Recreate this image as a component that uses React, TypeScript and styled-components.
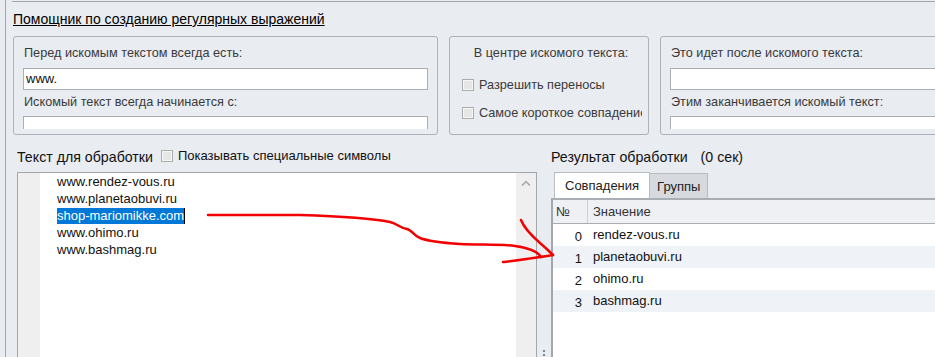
import styled, { createGlobalStyle } from "styled-components";

const GlobalStyle = createGlobalStyle`
  html, body {
    margin: 0;
    padding: 0;
    background: #e9ecf1;
  }
  body {
    font-family: "Liberation Sans", Arial, sans-serif;
    font-size: 13px;
    color: #1e1e1e;
  }
`;

const sourceLines = ["www.rendez-vous.ru", "www.planetaobuvi.ru", "shop-mariomikke.com", "www.ohimo.ru", "www.bashmag.ru"];
const matches = ["rendez-vous.ru", "planetaobuvi.ru", "ohimo.ru", "bashmag.ru"];

const Frame = styled.div`
  position: relative;
  width: 929px;
  height: 357px;
  margin-left: 5px;
  border-left: 1px solid #a3a7ad;
  display: flex;
  flex-direction: column;
  overflow: hidden;
  background: #e9ecf1;
`;

const TopSection = styled.div`
  margin: 1px 0 0 6px;
  border-top: 1px solid #a3a7ad;
  padding-left: 1px;
  height: 133px;
`;

const Title = styled.div`
  margin-top: 9px;
  line-height: 17px;
  font-size: 14px;
  color: #000;
  text-decoration: underline;
  white-space: nowrap;
`;

const GroupRow = styled.div`
  display: flex;
  gap: 11px;
  margin-top: 8px;
  height: 99px;
`;

const GroupBox = styled.div<{ $w: number }>`
  flex: 0 0 ${(p) => p.$w}px;
  min-width: 0;
  box-sizing: border-box;
  border: 1px solid #aeb2b8;
  border-radius: 3px;
  display: flex;
  flex-direction: column;
  overflow: hidden;
`;

const GroupBody = styled.div<{ $tight?: boolean }>`
  flex: 1;
  overflow: hidden;
  margin-bottom: 5px;
  padding: 8px ${(p) => (p.$tight ? 6 : 9)}px 0 9px;
  display: flex;
  flex-direction: column;
`;

const Label = styled.div<{ $center?: boolean }>`
  font-size: 12.7px;
  line-height: 16px;
  padding-left: 1px;
  color: #3a3a3a;
  white-space: nowrap;
  text-align: ${(p) => (p.$center ? "center" : "left")};
`;

const TextInput = styled.div<{ $gap: number }>`
  flex: 0 0 auto;
  box-sizing: border-box;
  height: 22px;
  margin-top: ${(p) => p.$gap}px;
  margin-bottom: 4px;
  background: #fff;
  border: 1px solid #abafb5;
  padding: 0 2px;
  line-height: 20px;
  color: #111;
`;

const CheckRow = styled.label<{ $top: number }>`
  display: flex;
  align-items: center;
  gap: 5px;
  margin-top: ${(p) => p.$top}px;
  margin-left: 3px;
  font-size: 12.7px;
  line-height: 16px;
  color: #3a3a3a;
  white-space: nowrap;
  overflow: hidden;
`;

const Box = styled.span`
  flex: 0 0 auto;
  width: 12px;
  height: 12px;
  box-sizing: border-box;
  border: 1px solid #acacac;
  background: #e6e6e6;
  box-shadow: inset 0 0 0 1px #f7f7f7;
`;

const LowerRow = styled.div`
  flex: 1;
  display: flex;
  padding-left: 11px;
  min-height: 0;
`;

const LeftPane = styled.div`
  flex: 0 0 520px;
  display: flex;
  flex-direction: column;
`;

const PaneHeader = styled.div`
  display: flex;
  align-items: center;
  height: 18px;
  margin-top: 13px;
  margin-bottom: 6px;
  white-space: nowrap;
`;

const Heading = styled.span`
  font-size: 14.2px;
  color: #111;
`;

const HeaderCheck = styled(CheckRow)`
  margin: 0 0 2px 8px;
  font-size: 13px;
  color: #111;
`;

const Editor = styled.div`
  flex: 1;
  display: flex;
  border: 1px solid #a3a7ad;
  border-bottom: none;
  background: #fff;
`;

const Gutter = styled.div`
  flex: 0 0 22px;
  background: #efefef;
`;

const Lines = styled.div`
  flex: 1;
  padding: 0 0 0 17px;
`;

const Line = styled.div`
  line-height: 17px;
  height: 17px;
  color: #111;
  white-space: nowrap;
`;

const Selected = styled.span`
  display: inline-block;
  background: #0078d7;
  color: #fff;
  line-height: 16px;
  border-right: 1px solid #000;
`;

const Scrollbar = styled.div`
  flex: 0 0 20px;
  background: #efefef;
  display: flex;
  justify-content: center;
  padding-top: 7px;
`;

const Splitter = styled.div`
  flex: 0 0 14px;
  display: flex;
  align-items: flex-end;
  justify-content: center;
`;

const Grip = styled.div`
  width: 2px;
  height: 7px;
  margin-left: -1px;
  background: repeating-linear-gradient(#7d8188 0 2px, transparent 2px 4px);
`;

const RightPane = styled.div`
  flex: 1;
  display: flex;
  flex-direction: column;
`;

const Timing = styled.span`
  margin-left: 13px;
  font-size: 14.2px;
  color: #111;
`;

const TabStrip = styled.div`
  display: flex;
  align-items: flex-end;
  height: 26px;
  margin-left: 3px;
`;

const Tab = styled.div<{ $active?: boolean }>`
  box-sizing: border-box;
  height: ${(p) => (p.$active ? 26 : 25)}px;
  padding: 0 ${(p) => (p.$active ? 10 : 7)}px;
  background: ${(p) => (p.$active ? "#fff" : "#d6d9dd")};
  border: 1px solid #b9bdc3;
  border-bottom: none;
  border-left-width: ${(p) => (p.$active ? 1 : 0)}px;
  line-height: ${(p) => (p.$active ? 26 : 25)}px;
  color: #222;
`;

const Grid = styled.div`
  flex: 1;
  border-top: 2px solid #a9adb4;
  border-left: 2px solid #a3a7ad;
  background: #fff;
`;

const GridHead = styled.div`
  display: flex;
  height: 23px;
  background: #eef0f4;
  border-bottom: 1px solid #a9adb4;
  line-height: 23px;
  color: #333;
`;

const HeadCell = styled.div<{ $w?: number }>`
  flex: ${(p) => (p.$w ? `0 0 ${p.$w}px` : 1)};
  padding-left: ${(p) => (p.$w ? 3 : 5)}px;
  box-sizing: border-box;
  border-right: ${(p) => (p.$w ? "1px solid #cdd1d7" : "none")};
`;

const Row = styled.div<{ $alt: boolean }>`
  display: flex;
  height: 22px;
  line-height: 22px;
  background: ${(p) => (p.$alt ? "#eff2f7" : "#fff")};
  color: #111;
`;

const NumCell = styled.div`
  flex: 0 0 35px;
  box-sizing: border-box;
  padding: 2px 6px 0 0;
  text-align: right;
`;

const ValueCell = styled.div`
  flex: 1;
  padding-left: 5px;
`;

const Overlay = styled.svg`
  position: absolute;
  left: -6px;
  top: 0;
  pointer-events: none;
`;

const ChevronUp = () => (
  <svg width="10" height="6" viewBox="0 0 10 6">
    <path d="M1 5.5 L5 1.5 L9 5.5" fill="none" stroke="#a6a6a6" strokeWidth="1.5" />
  </svg>
);

export default function App() {
  return (
    <>
      <GlobalStyle />
      <Frame>
        <TopSection>
          <Title>Помощник по созданию регулярных выражений</Title>
          <GroupRow>
            <GroupBox $w={425}>
              <GroupBody>
                <Label>Перед искомым текстом всегда есть:</Label>
                <TextInput $gap={7}>www.</TextInput>
                <Label>Искомый текст всегда начинается с:</Label>
                <TextInput $gap={6} />
              </GroupBody>
            </GroupBox>
            <GroupBox $w={200}>
              <GroupBody $tight>
                <Label $center>В центре искомого текста:</Label>
                <CheckRow $top={16}>
                  <Box />
                  Разрешить переносы
                </CheckRow>
                <CheckRow $top={12}>
                  <Box />
                  Самое короткое совпадение
                </CheckRow>
              </GroupBody>
            </GroupBox>
            <GroupBox $w={320}>
              <GroupBody>
                <Label>Это идет после искомого текста:</Label>
                <TextInput $gap={7} />
                <Label>Этим заканчивается искомый текст:</Label>
                <TextInput $gap={6} />
              </GroupBody>
            </GroupBox>
          </GroupRow>
        </TopSection>

        <LowerRow>
          <LeftPane>
            <PaneHeader>
              <Heading>Текст для обработки</Heading>
              <HeaderCheck $top={0}>
                <Box />
                Показывать специальные символы
              </HeaderCheck>
            </PaneHeader>
            <Editor>
              <Gutter />
              <Lines>
                {sourceLines.map((l, i) => (
                  <Line key={l}>{i === 2 ? <Selected>{l}</Selected> : l}</Line>
                ))}
              </Lines>
              <Scrollbar>
                <ChevronUp />
              </Scrollbar>
            </Editor>
          </LeftPane>

          <Splitter>
            <Grip />
          </Splitter>

          <RightPane>
            <PaneHeader>
              <Heading>Результат обработки</Heading>
              <Timing>(0 сек)</Timing>
            </PaneHeader>
            <TabStrip>
              <Tab $active>Совпадения</Tab>
              <Tab>Группы</Tab>
            </TabStrip>
            <Grid>
              <GridHead>
                <HeadCell $w={35}>№</HeadCell>
                <HeadCell>Значение</HeadCell>
              </GridHead>
              {matches.map((m, i) => (
                <Row key={m} $alt={i % 2 === 1}>
                  <NumCell>{i}</NumCell>
                  <ValueCell>{m}</ValueCell>
                </Row>
              ))}
            </Grid>
          </RightPane>
        </LowerRow>

        <Overlay width="935" height="357" viewBox="0 0 935 357">
          <g fill="none" stroke="#f20000" strokeWidth="2.5" strokeLinecap="round" strokeLinejoin="round">
            <path d="M208 215 L300 215 C330 216 370 218 390 222 C398 224 400 228 407 229 C412 230 414 236 420 238 C430 242 445 243 460 244 C480 245 500 244 515 246 C530 248 538 252 541 257" />
            <path d="M521 220 C524 228 532 236 540 243 C546 248 550 252 553 255" />
            <path d="M503 262 C520 260 535 258 553 255" />
          </g>
        </Overlay>
      </Frame>
    </>
  );
}
